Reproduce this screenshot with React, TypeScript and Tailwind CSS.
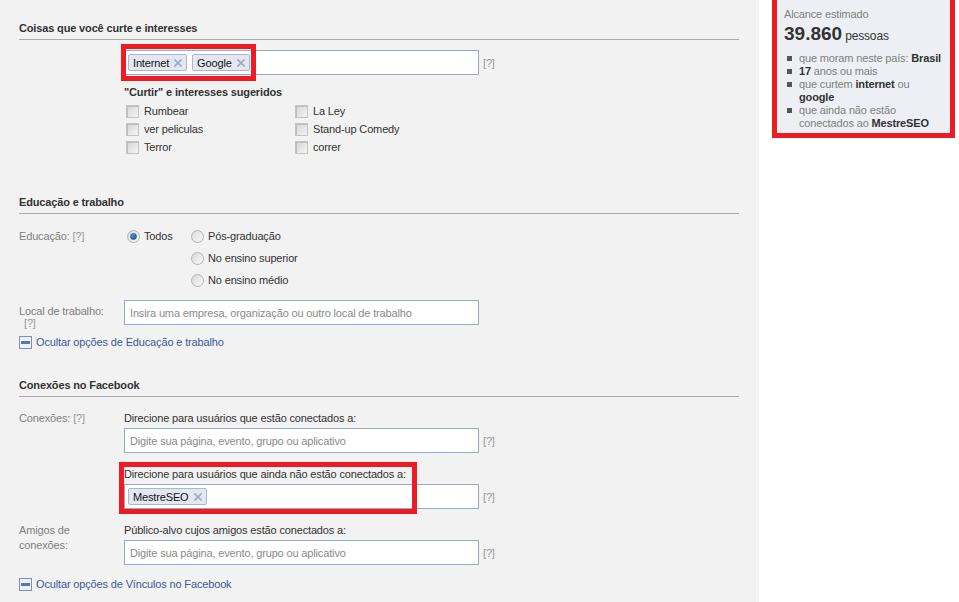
import React from "react";

const Heading = ({ children, className = "" }: { children: React.ReactNode; className?: string }) => (
  <div className={`pb-[4px] border-b border-[#aaaaaa] text-[11px] leading-[14px] font-bold text-[#333333] ${className}`}>
    {children}
  </div>
);

const Q = ({ className = "" }: { className?: string }) => (
  <span className={`text-[#9a9a9a] text-[11px] ${className}`}>[?]</span>
);

const XIcon = () => (
  <svg width="8" height="8" viewBox="0 0 8 8" className="ml-[5px]">
    <path d="M1 1 L7 7 M7 1 L1 7" stroke="#9ca7c2" strokeWidth="1.6" strokeLinecap="square" />
  </svg>
);

const Tag = ({ label }: { label: string }) => (
  <span className="inline-flex items-center h-[17px] px-[4px] border border-[#aab6d2] bg-[#e3e7f1] rounded-[2px] text-[11px] leading-[14px] text-[#111111]">
    {label}
    <XIcon />
  </span>
);

const Checkbox = ({ label }: { label: string }) => (
  <div className="flex items-center h-[18px] gap-[5px]">
    <span className="w-[13px] h-[13px] border border-[#c4c4c4] bg-gradient-to-br from-[#d6d6d6] to-[#f4f4f4] shadow-[inset_1px_1px_0_#bdbdbd]" />
    <span className="text-[#333333]">{label}</span>
  </div>
);

const Radio = ({ label, checked = false }: { label: string; checked?: boolean }) => (
  <div className="flex items-center h-[22px] gap-[4px]">
    <span className="w-[13px] h-[13px] rounded-full border border-[#b4b4b4] bg-gradient-to-br from-[#d8d8d8] to-[#fbfbfb] flex items-center justify-center">
      {checked && (
        <span className="w-[7px] h-[7px] rounded-full bg-gradient-to-br from-[#5aa0d8] to-[#1d5a92] border border-[#2d5f8c]" />
      )}
    </span>
    <span className="text-[#333333]">{label}</span>
  </div>
);

const MinusLink = ({ label, className = "" }: { label: string; className?: string }) => (
  <div className={`flex items-center h-[14px] gap-[4px] ${className}`}>
    <span className="w-[13px] h-[13px] border border-[#7d91bb] bg-[#eef1f7] flex items-center justify-center">
      <span className="w-[9px] h-[3px] bg-[#5f76a8]" />
    </span>
    <span className="text-[#3b5998] leading-[14px]">{label}</span>
  </div>
);

const TextInput = ({ placeholder }: { placeholder: string }) => (
  <div className="w-[355px] h-[25px] bg-white border border-[#98a8c9] flex items-center pl-[5px] text-[#8a8a8a] text-[11px]">
    {placeholder}
  </div>
);

export default function App() {
  return (
    <div className="flex w-[959px] h-[602px] overflow-hidden font-['Liberation_Sans',Arial,sans-serif] text-[11px] leading-[14px] tracking-[-0.15px]">
      {/* Main column */}
      <div className="w-[759px] shrink-0 bg-[#f2f2f2] pl-[19px] pt-[21px]">
        <div className="w-[720px]">
          {/* Section 1 */}
          <Heading>Coisas que você curte e interesses</Heading>
          <div className="mt-[10px] pl-[105px]">
            <div className="flex items-center">
              <div className="relative w-[355px] h-[25px] bg-white border border-[#98a8c9] flex items-center gap-[5px] pl-[3px]">
                <Tag label="Internet" />
                <Tag label="Google" />
                <div className="absolute left-[-4px] top-[-7px] w-[135px] h-[37px] border-[5px] border-[#ed1c24]" />
              </div>
              <Q className="ml-[4px]" />
            </div>
            <div className="mt-[10px] font-bold text-[#333333]">"Curtir" e interesses sugeridos</div>
            <div className="mt-[3px] pl-[2px] grid grid-cols-[169px_auto]">
              <Checkbox label="Rumbear" />
              <Checkbox label="La Ley" />
              <Checkbox label="ver peliculas" />
              <Checkbox label="Stand-up Comedy" />
              <Checkbox label="Terror" />
              <Checkbox label="correr" />
            </div>
          </div>

          {/* Section 2 */}
          <Heading className="mt-[39px]">Educação e trabalho</Heading>
          <div className="mt-[11px] flex">
            <div className="w-[105px] leading-[22px] text-[#808080]">
              Educação: <Q />
            </div>
            <div className="flex pl-[3px]">
              <div className="w-[64px]">
                <Radio label="Todos" checked />
              </div>
              <div>
                <Radio label="Pós-graduação" />
                <Radio label="No ensino superior" />
                <Radio label="No ensino médio" />
              </div>
            </div>
          </div>
          <div className="mt-[9px] flex h-[25px]">
            <div className="w-[105px] pt-[5px] leading-[12px] text-[#808080]">
              Local de trabalho:
              <div className="pl-[5px]">
                <Q />
              </div>
            </div>
            <TextInput placeholder="Insira uma empresa, organização ou outro local de trabalho" />
          </div>
          <MinusLink className="mt-[10px]" label="Ocultar opções de Educação e trabalho" />

          {/* Section 3 */}
          <Heading className="mt-[29px]">Conexões no Facebook</Heading>
          <div className="mt-[14px] flex">
            <div className="w-[105px] text-[#808080]">
              Conexões: <Q />
            </div>
            <div>
              <div className="text-[#333333]">Direcione para usuários que estão conectados a:</div>
              <div className="mt-[3px] flex items-center">
                <TextInput placeholder="Digite sua página, evento, grupo ou aplicativo" />
                <Q className="ml-[4px]" />
              </div>
              <div className="relative mt-[14px]">
                <div className="text-[#333333]">Direcione para usuários que ainda não estão conectados a:</div>
                <div className="mt-[3px] flex items-center">
                  <div className="w-[355px] h-[25px] bg-white border border-[#98a8c9] flex items-center pl-[3px]">
                    <Tag label="MestreSEO" />
                  </div>
                  <Q className="ml-[4px]" />
                </div>
                <div className="absolute left-[-5px] top-[-5px] w-[298px] h-[52px] border-[5px] border-[#ed1c24]" />
              </div>
            </div>
          </div>
          <div className="mt-[14px] flex">
            <div className="w-[105px] leading-[15px] text-[#808080]">
              Amigos de
              <br />
              conexões:
            </div>
            <div>
              <div className="text-[#333333]">Público-alvo cujos amigos estão conectados a:</div>
              <div className="mt-[3px] flex items-center">
                <TextInput placeholder="Digite sua página, evento, grupo ou aplicativo" />
                <Q className="ml-[4px]" />
              </div>
            </div>
          </div>
          <MinusLink className="mt-[12px]" label="Ocultar opções de Vínculos no Facebook" />
        </div>
      </div>

      {/* Right column */}
      <div className="flex-1 bg-white pl-[13px]">
        <div className="w-[183px] border-[5px] border-t-0 border-[#ed1c24]">
          <div className="bg-[#edeff4] pl-[7px] pt-[7px] pb-[3px]">
            <div className="text-[#808080] leading-[14px]">Alcance estimado</div>
            <div className="mt-[2px] flex items-baseline leading-[22px]">
              <span className="font-bold text-[19px] text-[#333333] tracking-normal">39.860</span>
              <span className="ml-[3px] text-[12px] text-[#333333]">pessoas</span>
            </div>
            <ul className="mt-[5px] text-[#808080] leading-[13px]">
              <li className="flex items-start">
                <span className="mt-[4px] ml-[3px] w-[5px] h-[5px] bg-[#555555] shrink-0" />
                <span className="ml-[7px]">
                  que moram neste país: <b className="text-[#333333]">Brasil</b>
                </span>
              </li>
              <li className="flex items-start">
                <span className="mt-[4px] ml-[3px] w-[5px] h-[5px] bg-[#555555] shrink-0" />
                <span className="ml-[7px]">
                  <b className="text-[#333333]">17</b> anos ou mais
                </span>
              </li>
              <li className="flex items-start">
                <span className="mt-[4px] ml-[3px] w-[5px] h-[5px] bg-[#555555] shrink-0" />
                <span className="ml-[7px]">
                  que curtem <b className="text-[#333333]">internet</b> ou
                  <br />
                  <b className="text-[#333333]">google</b>
                </span>
              </li>
              <li className="flex items-start">
                <span className="mt-[4px] ml-[3px] w-[5px] h-[5px] bg-[#555555] shrink-0" />
                <span className="ml-[7px]">
                  que ainda não estão
                  <br />
                  conectados ao <b className="text-[#333333]">MestreSEO</b>
                </span>
              </li>
            </ul>
          </div>
        </div>
      </div>
    </div>
  );
}
